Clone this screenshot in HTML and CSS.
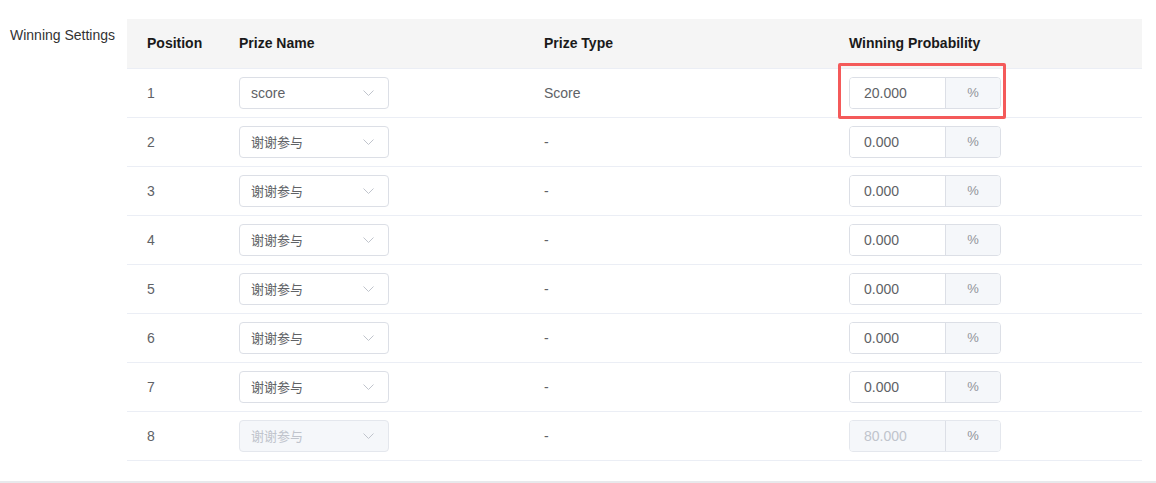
FILE: index.html
```html
<!DOCTYPE html>
<html>
<head>
<meta charset="utf-8">
<link rel="stylesheet" href="styles.css">
</head>
<body>
<div class="page">
  <div class="form-item">
    <div class="label">Winning Settings</div>
    <div class="content">
      <table class="grid">
        <thead>
          <tr><th class="c1">Position</th><th class="c2">Prize Name</th><th class="c3">Prize Type</th><th class="c4">Winning Probability</th></tr>
        </thead>
        <tbody>
          <tr>
            <td>1</td>
            <td><div class="select"><span class="val latin">score</span><svg class="chev" width="11" height="6" viewBox="0 0 11 6"><path d="M0.5 0.5 L5.5 5.5 L10.5 0.5" fill="none" stroke="#c0c4cc" stroke-width="1"/></svg></div></td>
            <td>Score</td>
            <td class="pcell"><div class="hl"></div><div class="ig"><div class="inp">20.000</div><div class="suf">%</div></div></td>
          </tr>
          <tr>
            <td>2</td>
            <td><div class="select"><span class="val">谢谢参与</span><svg class="chev" width="11" height="6" viewBox="0 0 11 6"><path d="M0.5 0.5 L5.5 5.5 L10.5 0.5" fill="none" stroke="#c0c4cc" stroke-width="1"/></svg></div></td>
            <td>-</td>
            <td><div class="ig"><div class="inp">0.000</div><div class="suf">%</div></div></td>
          </tr>
          <tr>
            <td>3</td>
            <td><div class="select"><span class="val">谢谢参与</span><svg class="chev" width="11" height="6" viewBox="0 0 11 6"><path d="M0.5 0.5 L5.5 5.5 L10.5 0.5" fill="none" stroke="#c0c4cc" stroke-width="1"/></svg></div></td>
            <td>-</td>
            <td><div class="ig"><div class="inp">0.000</div><div class="suf">%</div></div></td>
          </tr>
          <tr>
            <td>4</td>
            <td><div class="select"><span class="val">谢谢参与</span><svg class="chev" width="11" height="6" viewBox="0 0 11 6"><path d="M0.5 0.5 L5.5 5.5 L10.5 0.5" fill="none" stroke="#c0c4cc" stroke-width="1"/></svg></div></td>
            <td>-</td>
            <td><div class="ig"><div class="inp">0.000</div><div class="suf">%</div></div></td>
          </tr>
          <tr>
            <td>5</td>
            <td><div class="select"><span class="val">谢谢参与</span><svg class="chev" width="11" height="6" viewBox="0 0 11 6"><path d="M0.5 0.5 L5.5 5.5 L10.5 0.5" fill="none" stroke="#c0c4cc" stroke-width="1"/></svg></div></td>
            <td>-</td>
            <td><div class="ig"><div class="inp">0.000</div><div class="suf">%</div></div></td>
          </tr>
          <tr>
            <td>6</td>
            <td><div class="select"><span class="val">谢谢参与</span><svg class="chev" width="11" height="6" viewBox="0 0 11 6"><path d="M0.5 0.5 L5.5 5.5 L10.5 0.5" fill="none" stroke="#c0c4cc" stroke-width="1"/></svg></div></td>
            <td>-</td>
            <td><div class="ig"><div class="inp">0.000</div><div class="suf">%</div></div></td>
          </tr>
          <tr>
            <td>7</td>
            <td><div class="select"><span class="val">谢谢参与</span><svg class="chev" width="11" height="6" viewBox="0 0 11 6"><path d="M0.5 0.5 L5.5 5.5 L10.5 0.5" fill="none" stroke="#c0c4cc" stroke-width="1"/></svg></div></td>
            <td>-</td>
            <td><div class="ig"><div class="inp">0.000</div><div class="suf">%</div></div></td>
          </tr>
          <tr>
            <td>8</td>
            <td><div class="select disabled"><span class="val">谢谢参与</span><svg class="chev" width="11" height="6" viewBox="0 0 11 6"><path d="M0.5 0.5 L5.5 5.5 L10.5 0.5" fill="none" stroke="#c0c4cc" stroke-width="1"/></svg></div></td>
            <td>-</td>
            <td><div class="ig disabled"><div class="inp">80.000</div><div class="suf">%</div></div></td>
          </tr>
        </tbody>
      </table>
    </div>
  </div>
  <div class="divider"></div>
</div>
</body>
</html>
```

FILE: styles.css
```css
* { box-sizing: border-box; }
html, body { margin: 0; padding: 0; background: #fff; }
body {
  font-family: "Liberation Sans", Arial, "Noto Sans CJK SC", sans-serif;
  font-size: 14px;
  color: #606266;
}
.page { padding-top: 19px; }
.form-item { display: flex; }
.label {
  width: 127px;
  padding-left: 10px;
  padding-top: 8px;
  line-height: 16px;
  color: #333;
  font-size: 14px;
}
.content { width: 1015px; }
.grid {
  width: 100%;
  border-collapse: collapse;
  table-layout: fixed;
}
.grid th {
  background: #f5f5f5;
  height: 49px;
  text-align: left;
  font-weight: bold;
  color: #1a1a1a;
  padding: 0 0 0 20px;
  border-bottom: 1px solid #ebeef5;
  font-size: 14px;
}
.c1 { width: 92px; }
.c2 { width: 305px; }
.c3 { width: 305px; }
.grid td {
  height: 49px;
  padding: 0 0 0 20px;
  border-bottom: 1px solid #ebeef5;
  color: #606266;
  vertical-align: middle;
}
.select {
  width: 150px;
  height: 32px;
  border: 1px solid #dcdfe6;
  border-radius: 4px;
  display: flex;
  align-items: center;
  justify-content: space-between;
  padding: 0 14px 0 11px;
  background: #fff;
  color: #606266;
  font-family: "Noto Sans CJK SC", "Liberation Sans", sans-serif;
  font-size: 13px;
}
.select .val.latin { font-family: "Liberation Sans", Arial, sans-serif; font-size: 14px; }
.select.disabled { background: #f5f7fa; border-color: #e4e7ed; color: #c0c4cc; }
.chev { display: block; }
.pcell { position: relative; }
.hl {
  position: absolute;
  left: 9px;
  top: -6px;
  width: 168px;
  height: 56px;
  border: 3px solid #f45a5a;
  border-radius: 2px;
  pointer-events: none;
}
.ig {
  display: flex;
  width: 152px;
  height: 32px;
  border: 1px solid #dcdfe6;
  border-radius: 4px;
  overflow: hidden;
}
.inp {
  flex: 1;
  display: flex;
  align-items: center;
  padding-left: 14px;
  color: #606266;
  font-size: 14px;
  background: #fff;
}
.suf {
  width: 55px;
  display: flex;
  align-items: center;
  justify-content: center;
  background: #f5f7fa;
  border-left: 1px solid #dcdfe6;
  color: #909399;
  font-size: 13px;
}
.ig.disabled .inp { background: #f5f7fa; color: #c0c4cc; }
.ig.disabled { border-color: #e4e7ed; }
.divider {
  margin-top: 20px;
  height: 2px;
  background: #e8e9ec;
}
```
